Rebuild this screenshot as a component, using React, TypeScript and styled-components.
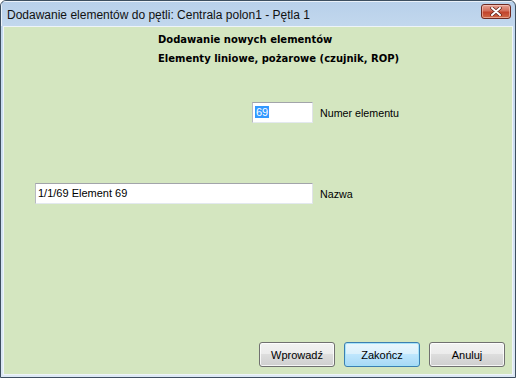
import styled, { createGlobalStyle } from "styled-components";

const GlobalStyle = createGlobalStyle`
  html, body {
    margin: 0;
    padding: 0;
    background: #ffffff;
  }
  body {
    font-family: "Liberation Sans", Arial, sans-serif;
  }
`;

const Window = styled.div`
  box-sizing: border-box;
  width: 516px;
  height: 378px;
  display: flex;
  flex-direction: column;
  border: 1px solid #3d4f60;
  border-radius: 6px 6px 0 0;
  background: linear-gradient(#b8d0ea, #c4d9ee 30px, #dce8f4);
  overflow: hidden;
`;

const TitleBar = styled.div`
  height: 25px;
  display: flex;
  align-items: flex-start;
  justify-content: space-between;
  padding: 0 4px 0 6px;
  box-shadow: inset 1px 1px 0 rgba(255, 255, 255, 0.7);
`;

const Title = styled.div`
  font-family: "Liberation Sans", Arial, sans-serif;
  font-size: 12px;
  line-height: 15px;
  margin-top: 7px;
  color: #111;
`;

const CloseButton = styled.div`
  box-sizing: border-box;
  width: 30px;
  height: 15px;
  margin-top: 3px;
  display: flex;
  align-items: center;
  justify-content: center;
  border: 1px solid #6e2a22;
  border-radius: 3px;
  background: linear-gradient(#e6a294, #d26e5a 45%, #c2432c 55%, #cf6a48);
  box-shadow: inset 0 0 0 1px rgba(255, 220, 210, 0.5);
`;

const Body = styled.div`
  flex: 1;
  margin: 0 2px 2px 2px;
  border: 1px solid #eef4f9;
  background: #d4e6c0;
  display: flex;
  flex-direction: column;
  padding-top: 3px;
`;

const Headings = styled.div`
  padding-left: 154px;
  font-family: "DejaVu Sans", Verdana, sans-serif;
  font-weight: bold;
  font-size: 10px;
  line-height: 19px;
  color: #000;
`;

const Form = styled.div`
  display: grid;
  grid-template-columns: 278px auto;
  column-gap: 7px;
  row-gap: 60px;
  align-items: center;
  margin-top: 34px;
  padding-left: 31px;
`;

const Field = styled.div<{ $width: number }>`
  box-sizing: border-box;
  justify-self: end;
  width: ${(p) => p.$width}px;
  height: 21px;
  background: #fff;
  border-style: solid;
  border-width: 1px;
  border-color: #a2a4aa #dfe3e8 #e3e9ef #b8bac0;
  padding: 2px 2px;
  font-size: 11px;
  line-height: 15px;
  color: #000;
  white-space: nowrap;
`;

const Selected = styled.span`
  background: #3399ff;
  color: #fff;
  padding: 0 1px;
`;

const Label = styled.div`
  font-size: 10.7px;
  color: #000;
`;

const Footer = styled.div`
  margin-top: auto;
  display: flex;
  justify-content: flex-end;
  gap: 9px;
  padding: 0 7px 7px 0;
`;

const Button = styled.div<{ $default?: boolean }>`
  box-sizing: border-box;
  width: 76px;
  height: 25px;
  display: flex;
  align-items: center;
  justify-content: center;
  font-size: 11px;
  color: #000;
  border-radius: 3px;
  border: 1px solid ${(p) => (p.$default ? "#3c7fb1" : "#707070")};
  background: ${(p) =>
    p.$default
      ? "linear-gradient(#eaf6fd, #d9f0fc 50%, #bee6fd 50%, #a7d9f5)"
      : "linear-gradient(#f2f2f2, #ebebeb 50%, #dddddd 50%, #cfcfcf)"};
  box-shadow: inset 0 0 0 1px
    ${(p) => (p.$default ? "rgba(160, 225, 250, 0.9)" : "rgba(255, 255, 255, 0.8)")};
`;

export default function App() {
  return (
    <>
      <GlobalStyle />
      <Window>
        <TitleBar>
          <Title>Dodawanie elementów do pętli: Centrala polon1 - Pętla 1</Title>
          <CloseButton>
            <svg width="12" height="9" viewBox="0 0 12 9">
              <path
                d="M2 1 L10 8 M10 1 L2 8"
                stroke="#5a2018"
                strokeWidth="3.4"
                strokeLinecap="round"
              />
              <path
                d="M2 1 L10 8 M10 1 L2 8"
                stroke="#ffffff"
                strokeWidth="2"
                strokeLinecap="round"
              />
            </svg>
          </CloseButton>
        </TitleBar>
        <Body>
          <Headings>
            <div>Dodawanie nowych elementów</div>
            <div>Elementy liniowe, pożarowe (czujnik, ROP)</div>
          </Headings>
          <Form>
            <Field $width={61}>
              <Selected>69</Selected>
            </Field>
            <Label>Numer elementu</Label>
            <Field $width={278}>1/1/69 Element 69</Field>
            <Label>Nazwa</Label>
          </Form>
          <Footer>
            <Button>Wprowadź</Button>
            <Button $default>Zakończ</Button>
            <Button>Anuluj</Button>
          </Footer>
        </Body>
      </Window>
    </>
  );
}
